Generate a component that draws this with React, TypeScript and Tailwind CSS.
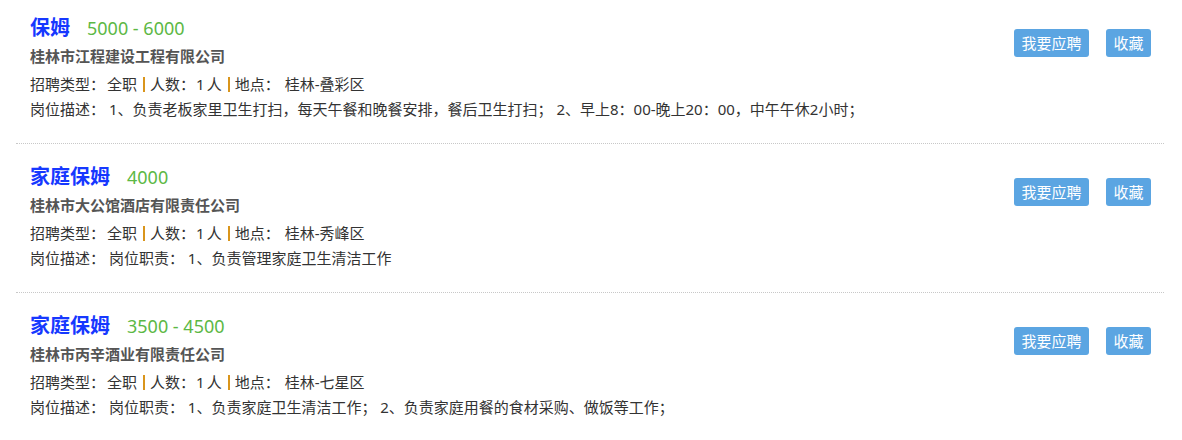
const jobs = [
  {
    title: '保姆',
    salary: '5000 - 6000',
    company: '桂林市江程建设工程有限公司',
    type: '全职',
    count: '1',
    place: '桂林-叠彩区',
    desc: '1、负责老板家里卫生打扫，每天午餐和晚餐安排，餐后卫生打扫； 2、早上8：00-晚上20：00，中午午休2小时；',
  },
  {
    title: '家庭保姆',
    salary: '4000',
    company: '桂林市大公馆酒店有限责任公司',
    type: '全职',
    count: '1',
    place: '桂林-秀峰区',
    desc: '岗位职责： 1、负责管理家庭卫生清洁工作',
  },
  {
    title: '家庭保姆',
    salary: '3500 - 4500',
    company: '桂林市丙辛酒业有限责任公司',
    type: '全职',
    count: '1',
    place: '桂林-七星区',
    desc: '岗位职责： 1、负责家庭卫生清洁工作； 2、负责家庭用餐的食材采购、做饭等工作；',
  },
];

// orange divider between the info fields
const Bar = () => (
  <span className="inline-block align-[-2px] w-[2px] h-[15px] bg-[#d9951c] ml-[6px] mr-[5px]" />
);

export default function App() {
  return (
    <div
      className="w-[1182px] h-[440px] bg-white overflow-hidden"
      style={{ fontFamily: '"Noto Sans", "Noto Sans CJK SC", sans-serif' }}
    >
      <div className="ml-[16px] mr-[18px]">
        {jobs.map((job, i) => (
          <div
            key={i}
            className={`flex border-b border-dotted border-[#c8c8c8] pl-[14px] pr-[13px] pb-[24px] ${
              i === 0 ? 'pt-[10px]' : 'pt-[15px]'
            }`}
          >
            <div className="flex-1 min-w-0">
              <div className="h-9 flex items-center">
                <span className="text-[20px] font-bold text-[#1638ff] leading-none">{job.title}</span>
                <span className="ml-[17px] text-[18px] text-[#5cb845] leading-none">{job.salary}</span>
              </div>
              <div className="h-5 leading-5 text-[15px] font-bold text-[#555]">{job.company}</div>
              <div className="mt-2 h-5 leading-5 text-[15px] text-[#333] whitespace-pre [text-spacing-trim:space-all]">
                招聘类型：<span className="ml-[2px]">{job.type}</span>
                <Bar />
                人数：<span className="ml-[1px]">{job.count}</span>
                <span className="ml-[2px]">人</span>
                <Bar />
                地点：<span className="ml-[5px]">{job.place}</span>
              </div>
              <div className="mt-[5px] h-5 leading-5 text-[15px] text-[#333] whitespace-pre [text-spacing-trim:space-all]">
                岗位描述： {job.desc}
              </div>
            </div>
            <div className="flex items-start gap-[17px] mt-[19px]">
              <button className="h-[28px] w-[75px] rounded-[3px] bg-[#5ba5e2] text-white text-[15px] leading-none">
                我要应聘
              </button>
              <button className="h-[28px] w-[45px] rounded-[3px] bg-[#5ba5e2] text-white text-[15px] leading-none">
                收藏
              </button>
            </div>
          </div>
        ))}
      </div>
    </div>
  );
}
